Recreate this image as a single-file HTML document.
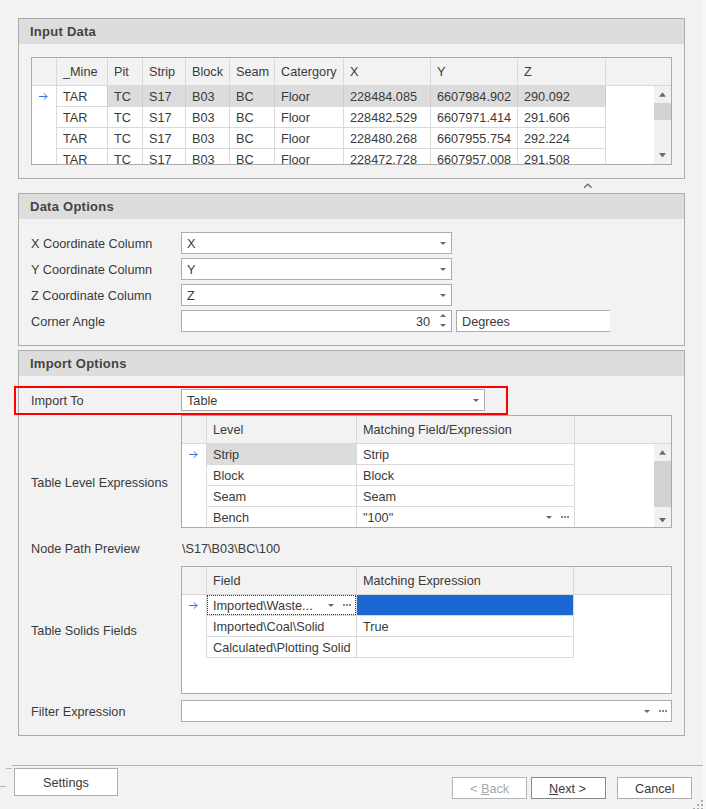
<!DOCTYPE html>
<html><head><meta charset="utf-8">
<style>
*{margin:0;padding:0;box-sizing:border-box}
html,body{width:706px;height:809px;overflow:hidden}
body{background:#f2f2f2;font-family:"Liberation Sans",sans-serif;font-size:12.7px;color:#3a3a3a;position:relative}
.a{position:absolute}
.t{position:absolute;white-space:nowrap;line-height:13px}
.gt{position:absolute;font-weight:bold;font-size:13px;letter-spacing:0.25px;line-height:13px;color:#444444;white-space:nowrap}
</style></head><body>

<div class="a" style="left:703px;top:0px;width:3px;height:809px;background:#f8f8f8;"></div>
<div class="a" style="left:18px;top:18px;width:667px;height:161px;border:1px solid #ababab;background:transparent;"></div>
<div class="a" style="left:19px;top:19px;width:665px;height:25px;background:#dddddd;"></div>
<div class="gt" style="left:30px;top:25px">Input Data</div>
<div class="a" style="left:31px;top:57px;width:641px;height:108px;border:1px solid #ababab;background:#fff;"></div>
<div class="a" style="left:32px;top:58px;width:639px;height:27px;background:#f2f2f2;"></div>
<div class="a" style="left:32px;top:85px;width:639px;height:1px;background:#d9d9d9;"></div>
<div class="a" style="left:56px;top:58px;width:1px;height:27px;background:#d9d9d9;"></div>
<div class="a" style="left:107px;top:58px;width:1px;height:27px;background:#d9d9d9;"></div>
<div class="a" style="left:142px;top:58px;width:1px;height:27px;background:#d9d9d9;"></div>
<div class="a" style="left:185px;top:58px;width:1px;height:27px;background:#d9d9d9;"></div>
<div class="a" style="left:229px;top:58px;width:1px;height:27px;background:#d9d9d9;"></div>
<div class="a" style="left:274px;top:58px;width:1px;height:27px;background:#d9d9d9;"></div>
<div class="a" style="left:343px;top:58px;width:1px;height:27px;background:#d9d9d9;"></div>
<div class="a" style="left:430px;top:58px;width:1px;height:27px;background:#d9d9d9;"></div>
<div class="a" style="left:517px;top:58px;width:1px;height:27px;background:#d9d9d9;"></div>
<div class="a" style="left:605px;top:58px;width:1px;height:27px;background:#d9d9d9;"></div>
<div class="t" style="left:63px;top:66px;">_Mine</div>
<div class="t" style="left:114px;top:66px;">Pit</div>
<div class="t" style="left:149px;top:66px;">Strip</div>
<div class="t" style="left:192px;top:66px;">Block</div>
<div class="t" style="left:236px;top:66px;">Seam</div>
<div class="t" style="left:281px;top:66px;">Catergory</div>
<div class="t" style="left:350px;top:66px;">X</div>
<div class="t" style="left:437px;top:66px;">Y</div>
<div class="t" style="left:524px;top:66px;">Z</div>
<div class="a" style="left:108px;top:86px;width:497px;height:20px;background:#dcdcdc;"></div>
<div class="a" style="left:57px;top:106px;width:548px;height:1px;background:#d9d9d9;"></div>
<div class="a" style="left:57px;top:127px;width:548px;height:1px;background:#d9d9d9;"></div>
<div class="a" style="left:57px;top:148px;width:548px;height:1px;background:#d9d9d9;"></div>
<div class="a" style="left:56px;top:86px;width:1px;height:78px;background:#d9d9d9;"></div>
<div class="a" style="left:107px;top:86px;width:1px;height:78px;background:#d9d9d9;"></div>
<div class="a" style="left:142px;top:86px;width:1px;height:78px;background:#d9d9d9;"></div>
<div class="a" style="left:185px;top:86px;width:1px;height:78px;background:#d9d9d9;"></div>
<div class="a" style="left:229px;top:86px;width:1px;height:78px;background:#d9d9d9;"></div>
<div class="a" style="left:274px;top:86px;width:1px;height:78px;background:#d9d9d9;"></div>
<div class="a" style="left:343px;top:86px;width:1px;height:78px;background:#d9d9d9;"></div>
<div class="a" style="left:430px;top:86px;width:1px;height:78px;background:#d9d9d9;"></div>
<div class="a" style="left:517px;top:86px;width:1px;height:78px;background:#d9d9d9;"></div>
<div class="a" style="left:605px;top:86px;width:1px;height:78px;background:#d9d9d9;"></div>
<div class="a" style="left:107px;top:86px;width:1px;height:20px;background:#cdcdcd;"></div>
<div class="a" style="left:142px;top:86px;width:1px;height:20px;background:#cdcdcd;"></div>
<div class="a" style="left:185px;top:86px;width:1px;height:20px;background:#cdcdcd;"></div>
<div class="a" style="left:229px;top:86px;width:1px;height:20px;background:#cdcdcd;"></div>
<div class="a" style="left:274px;top:86px;width:1px;height:20px;background:#cdcdcd;"></div>
<div class="a" style="left:343px;top:86px;width:1px;height:20px;background:#cdcdcd;"></div>
<div class="a" style="left:430px;top:86px;width:1px;height:20px;background:#cdcdcd;"></div>
<div class="a" style="left:517px;top:86px;width:1px;height:20px;background:#cdcdcd;"></div>
<div class="a" style="left:605px;top:86px;width:1px;height:20px;background:#cdcdcd;"></div>
<div class="a" style="left:32px;top:86px;width:639px;height:78px;overflow:hidden">
<div class="t" style="left:31px;top:5px">TAR</div>
<div class="t" style="left:82px;top:5px">TC</div>
<div class="t" style="left:117px;top:5px">S17</div>
<div class="t" style="left:160px;top:5px">B03</div>
<div class="t" style="left:204px;top:5px">BC</div>
<div class="t" style="left:249px;top:5px">Floor</div>
<div class="t" style="left:318px;top:5px">228484.085</div>
<div class="t" style="left:405px;top:5px">6607984.902</div>
<div class="t" style="left:492px;top:5px">290.092</div>
<div class="t" style="left:31px;top:26px">TAR</div>
<div class="t" style="left:82px;top:26px">TC</div>
<div class="t" style="left:117px;top:26px">S17</div>
<div class="t" style="left:160px;top:26px">B03</div>
<div class="t" style="left:204px;top:26px">BC</div>
<div class="t" style="left:249px;top:26px">Floor</div>
<div class="t" style="left:318px;top:26px">228482.529</div>
<div class="t" style="left:405px;top:26px">6607971.414</div>
<div class="t" style="left:492px;top:26px">291.606</div>
<div class="t" style="left:31px;top:47px">TAR</div>
<div class="t" style="left:82px;top:47px">TC</div>
<div class="t" style="left:117px;top:47px">S17</div>
<div class="t" style="left:160px;top:47px">B03</div>
<div class="t" style="left:204px;top:47px">BC</div>
<div class="t" style="left:249px;top:47px">Floor</div>
<div class="t" style="left:318px;top:47px">228480.268</div>
<div class="t" style="left:405px;top:47px">6607955.754</div>
<div class="t" style="left:492px;top:47px">292.224</div>
<div class="t" style="left:31px;top:68px">TAR</div>
<div class="t" style="left:82px;top:68px">TC</div>
<div class="t" style="left:117px;top:68px">S17</div>
<div class="t" style="left:160px;top:68px">B03</div>
<div class="t" style="left:204px;top:68px">BC</div>
<div class="t" style="left:249px;top:68px">Floor</div>
<div class="t" style="left:318px;top:68px">228472.728</div>
<div class="t" style="left:405px;top:68px">6607957.008</div>
<div class="t" style="left:492px;top:68px">291.508</div>
</div>
<div class="a" style="left:654px;top:86px;width:17px;height:78px;background:#f1f1f1;"></div>
<div class="a" style="left:654px;top:103px;width:17px;height:17px;background:#d2d2d2;"></div>
<div class="a" style="left:18px;top:193px;width:667px;height:153px;border:1px solid #ababab;background:transparent;"></div>
<div class="a" style="left:19px;top:194px;width:665px;height:25px;background:#dddddd;"></div>
<div class="gt" style="left:30px;top:200px">Data Options</div>
<div class="t" style="left:31px;top:238px;">X Coordinate Column</div>
<div class="a" style="left:181px;top:232px;width:271px;height:22px;border:1px solid #adadad;background:#fff;"></div>
<div class="t" style="left:187px;top:238px;">X</div>
<div class="t" style="left:31px;top:264px;">Y Coordinate Column</div>
<div class="a" style="left:181px;top:258px;width:271px;height:22px;border:1px solid #adadad;background:#fff;"></div>
<div class="t" style="left:187px;top:264px;">Y</div>
<div class="t" style="left:31px;top:290px;">Z Coordinate Column</div>
<div class="a" style="left:181px;top:284px;width:271px;height:22px;border:1px solid #adadad;background:#fff;"></div>
<div class="t" style="left:187px;top:290px;">Z</div>
<div class="t" style="left:31px;top:316px;">Corner Angle</div>
<div class="a" style="left:181px;top:310px;width:271px;height:22px;border:1px solid #adadad;background:#fff;"></div>
<div class="t" style="right:276px;top:316px;">30</div>
<div class="a" style="left:456px;top:310px;width:154px;height:22px;border:1px solid #adadad;border-right:none;background:#fff"></div>
<div class="t" style="left:462px;top:316px;">Degrees</div>
<div class="a" style="left:18px;top:350px;width:667px;height:386px;border:1px solid #ababab;background:transparent;"></div>
<div class="a" style="left:19px;top:351px;width:665px;height:25px;background:#dddddd;"></div>
<div class="gt" style="left:30px;top:357px">Import Options</div>
<div class="t" style="left:31px;top:395px;">Import To</div>
<div class="a" style="left:181px;top:389px;width:304px;height:22px;border:1px solid #adadad;background:#fff;"></div>
<div class="t" style="left:187px;top:395px;">Table</div>
<div class="a" style="left:14px;top:386px;width:494px;height:29px;border:2px solid #ff0000"></div>
<div class="a" style="left:181px;top:415px;width:491px;height:113px;border:1px solid #ababab;background:#fff;"></div>
<div class="a" style="left:182px;top:416px;width:489px;height:27px;background:#f2f2f2;"></div>
<div class="a" style="left:182px;top:443px;width:489px;height:1px;background:#d9d9d9;"></div>
<div class="a" style="left:206px;top:416px;width:1px;height:27px;background:#d9d9d9;"></div>
<div class="a" style="left:206px;top:444px;width:1px;height:83px;background:#d9d9d9;"></div>
<div class="a" style="left:356px;top:416px;width:1px;height:27px;background:#d9d9d9;"></div>
<div class="a" style="left:356px;top:444px;width:1px;height:83px;background:#d9d9d9;"></div>
<div class="a" style="left:574px;top:416px;width:1px;height:27px;background:#d9d9d9;"></div>
<div class="a" style="left:574px;top:444px;width:1px;height:83px;background:#d9d9d9;"></div>
<div class="t" style="left:213px;top:424px;">Level</div>
<div class="t" style="left:363px;top:424px;">Matching Field/Expression</div>
<div class="a" style="left:207px;top:444px;width:149px;height:20px;background:#dcdcdc;"></div>
<div class="a" style="left:207px;top:464px;width:367px;height:1px;background:#d9d9d9;"></div>
<div class="a" style="left:207px;top:485px;width:367px;height:1px;background:#d9d9d9;"></div>
<div class="a" style="left:207px;top:506px;width:367px;height:1px;background:#d9d9d9;"></div>
<div class="t" style="left:213px;top:449px;">Strip</div>
<div class="t" style="left:363px;top:449px;">Strip</div>
<div class="t" style="left:213px;top:470px;">Block</div>
<div class="t" style="left:363px;top:470px;">Block</div>
<div class="t" style="left:213px;top:491px;">Seam</div>
<div class="t" style="left:363px;top:491px;">Seam</div>
<div class="t" style="left:213px;top:512px;">Bench</div>
<div class="t" style="left:363px;top:512px;">"100"</div>
<div class="a" style="left:654px;top:444px;width:17px;height:83px;background:#f1f1f1;"></div>
<div class="a" style="left:654px;top:461px;width:17px;height:46px;background:#d2d2d2;"></div>
<div class="t" style="left:31px;top:477px;">Table Level Expressions</div>
<div class="t" style="left:31px;top:543px;">Node Path Preview</div>
<div class="t" style="left:182px;top:543px;">\S17\B03\BC\100</div>
<div class="a" style="left:181px;top:566px;width:491px;height:128px;border:1px solid #ababab;background:#fff;"></div>
<div class="a" style="left:182px;top:567px;width:489px;height:27px;background:#f2f2f2;"></div>
<div class="a" style="left:182px;top:594px;width:489px;height:1px;background:#d9d9d9;"></div>
<div class="a" style="left:206px;top:567px;width:1px;height:27px;background:#d9d9d9;"></div>
<div class="a" style="left:356px;top:567px;width:1px;height:27px;background:#d9d9d9;"></div>
<div class="a" style="left:573px;top:567px;width:1px;height:27px;background:#d9d9d9;"></div>
<div class="a" style="left:206px;top:595px;width:1px;height:63px;background:#d9d9d9;"></div>
<div class="a" style="left:356px;top:595px;width:1px;height:63px;background:#d9d9d9;"></div>
<div class="a" style="left:573px;top:595px;width:1px;height:63px;background:#d9d9d9;"></div>
<div class="a" style="left:207px;top:615px;width:367px;height:1px;background:#d9d9d9;"></div>
<div class="a" style="left:207px;top:636px;width:367px;height:1px;background:#d9d9d9;"></div>
<div class="a" style="left:207px;top:657px;width:367px;height:1px;background:#d9d9d9;"></div>
<div class="t" style="left:213px;top:575px;">Field</div>
<div class="t" style="left:363px;top:575px;">Matching Expression</div>
<div class="a" style="left:357px;top:595px;width:216px;height:20px;background:#1b68d4;"></div>
<div class="a" style="left:207px;top:595px;width:149px;height:20px;border:1px dotted #333"></div>
<div class="t" style="left:213px;top:600px;">Imported\Waste...</div>
<div class="t" style="left:213px;top:621px;">Imported\Coal\Solid</div>
<div class="t" style="left:363px;top:621px;">True</div>
<div class="t" style="left:213px;top:642px;">Calculated\Plotting Solid</div>
<div class="t" style="left:31px;top:625px;">Table Solids Fields</div>
<div class="t" style="left:31px;top:706px;">Filter Expression</div>
<div class="a" style="left:181px;top:700px;width:491px;height:22px;border:1px solid #adadad;background:#fff;"></div>
<div class="a" style="left:12px;top:765px;width:691px;height:1px;background:#b4b4b4;"></div>
<div class="a" style="left:6px;top:768px;width:6px;height:1px;background:#b4b4b4;"></div>
<div class="a" style="left:0px;top:786px;width:6px;height:1px;background:#b4b4b4;"></div>
<div class="a" style="left:14px;top:768px;width:104px;height:28px;border:1px solid #adadad;background:#fff;"></div>
<div class="t" style="left:43px;top:777px;">Settings</div>
<div class="a" style="left:452px;top:777px;width:75px;height:22px;border:1px solid #b5b5b5;background:#fff;"></div>
<div class="t" style="left:470px;top:783px;color:#a8a8a8">&lt; <u>B</u>ack</div>
<div class="a" style="left:531px;top:777px;width:75px;height:22px;border:1px solid #8a8a8a;background:#fff;"></div>
<div class="t" style="left:549px;top:783px;"><u>N</u>ext &gt;</div>
<div class="a" style="left:617px;top:777px;width:75px;height:22px;border:1px solid #adadad;background:#fff;"></div>
<div class="a" style="left:701px;top:800px;width:2px;height:2px;background:#ababab;"></div>
<div class="a" style="left:697px;top:804px;width:2px;height:2px;background:#ababab;"></div>
<div class="a" style="left:701px;top:804px;width:2px;height:2px;background:#ababab;"></div>
<div class="a" style="left:693px;top:808px;width:2px;height:2px;background:#ababab;"></div>
<div class="a" style="left:697px;top:808px;width:2px;height:2px;background:#ababab;"></div>
<div class="a" style="left:701px;top:808px;width:2px;height:2px;background:#ababab;"></div>
<div class="t" style="left:635px;top:783px;">Cancel</div>
<svg class="a" style="left:0;top:0" width="706" height="809" viewBox="0 0 706 809"><path d="M39 96.5 H47.4 M43.8 93.5 L47.2 96.5 L43.8 99.5" fill="none" stroke="#2f78dc" stroke-width="1"/><path d="M659 96.8 H666 L662.5 92.2 Z" fill="#6b6b6b"/><path d="M659 153 H666 L662.5 157.6 Z" fill="#6b6b6b"/><path d="M584.2 187.8 L587.9 184.2 L591.6 187.8" fill="none" stroke="#666" stroke-width="1.2"/><path d="M440 242 H446 L443.0 245 Z" fill="#6b6b6b"/><path d="M440 268 H446 L443.0 271 Z" fill="#6b6b6b"/><path d="M440 294 H446 L443.0 297 Z" fill="#6b6b6b"/><path d="M440 317 H446 L443.0 314 Z" fill="#6b6b6b"/><path d="M440 324 H446 L443.0 327 Z" fill="#6b6b6b"/><path d="M473 399 H479 L476.0 402 Z" fill="#6b6b6b"/><path d="M546 516 H552 L549.0 519 Z" fill="#6b6b6b"/><rect x="561" y="516" width="2" height="2" fill="#878787"/><rect x="564" y="516" width="2" height="2" fill="#878787"/><rect x="567" y="516" width="2" height="2" fill="#878787"/><path d="M189 454.5 H197.4 M193.8 451.5 L197.2 454.5 L193.8 457.5" fill="none" stroke="#2f78dc" stroke-width="1"/><path d="M659 454.8 H666 L662.5 450.2 Z" fill="#6b6b6b"/><path d="M659 518 H666 L662.5 522.6 Z" fill="#6b6b6b"/><path d="M328 604 H334 L331.0 607 Z" fill="#6b6b6b"/><rect x="343" y="604" width="2" height="2" fill="#878787"/><rect x="346" y="604" width="2" height="2" fill="#878787"/><rect x="349" y="604" width="2" height="2" fill="#878787"/><path d="M189 605.5 H197.4 M193.8 602.5 L197.2 605.5 L193.8 608.5" fill="none" stroke="#2f78dc" stroke-width="1"/><path d="M644 710 H650 L647.0 713 Z" fill="#6b6b6b"/><rect x="659" y="710" width="2" height="2" fill="#878787"/><rect x="662" y="710" width="2" height="2" fill="#878787"/><rect x="665" y="710" width="2" height="2" fill="#878787"/></svg>
</body></html>
